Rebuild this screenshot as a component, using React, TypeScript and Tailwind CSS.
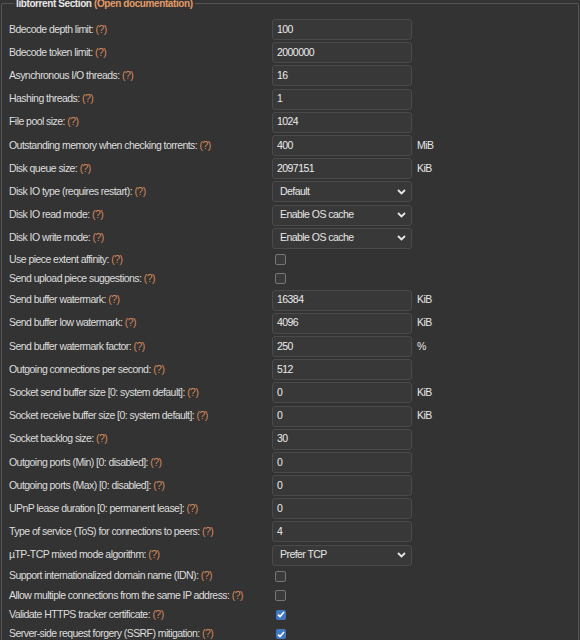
import React from "react";

type Row =
  | { kind: "input"; label: string; value: string; unit?: string }
  | { kind: "select"; label: string; value: string }
  | { kind: "check"; label: string; checked: boolean };

const rows: Row[] = [
  { kind: "input", label: "Bdecode depth limit:", value: "100" },
  { kind: "input", label: "Bdecode token limit:", value: "2000000" },
  { kind: "input", label: "Asynchronous I/O threads:", value: "16" },
  { kind: "input", label: "Hashing threads:", value: "1" },
  { kind: "input", label: "File pool size:", value: "1024" },
  { kind: "input", label: "Outstanding memory when checking torrents:", value: "400", unit: "MiB" },
  { kind: "input", label: "Disk queue size:", value: "2097151", unit: "KiB" },
  { kind: "select", label: "Disk IO type (requires restart):", value: "Default" },
  { kind: "select", label: "Disk IO read mode:", value: "Enable OS cache" },
  { kind: "select", label: "Disk IO write mode:", value: "Enable OS cache" },
  { kind: "check", label: "Use piece extent affinity:", checked: false },
  { kind: "check", label: "Send upload piece suggestions:", checked: false },
  { kind: "input", label: "Send buffer watermark:", value: "16384", unit: "KiB" },
  { kind: "input", label: "Send buffer low watermark:", value: "4096", unit: "KiB" },
  { kind: "input", label: "Send buffer watermark factor:", value: "250", unit: "%" },
  { kind: "input", label: "Outgoing connections per second:", value: "512" },
  { kind: "input", label: "Socket send buffer size [0: system default]:", value: "0", unit: "KiB" },
  { kind: "input", label: "Socket receive buffer size [0: system default]:", value: "0", unit: "KiB" },
  { kind: "input", label: "Socket backlog size:", value: "30" },
  { kind: "input", label: "Outgoing ports (Min) [0: disabled]:", value: "0" },
  { kind: "input", label: "Outgoing ports (Max) [0: disabled]:", value: "0" },
  { kind: "input", label: "UPnP lease duration [0: permanent lease]:", value: "0" },
  { kind: "input", label: "Type of service (ToS) for connections to peers:", value: "4" },
  { kind: "select", label: "µTP-TCP mixed mode algorithm:", value: "Prefer TCP" },
  { kind: "check", label: "Support internationalized domain name (IDN):", checked: false },
  { kind: "check", label: "Allow multiple connections from the same IP address:", checked: false },
  { kind: "check", label: "Validate HTTPS tracker certificate:", checked: true },
  { kind: "check", label: "Server-side request forgery (SSRF) mitigation:", checked: true },
];

function Chevron() {
  return (
    <svg width="9" height="6" viewBox="0 0 9 6" className="shrink-0">
      <path d="M1 1l3.5 3.5L8 1" fill="none" stroke="#e6e6e6" strokeWidth="1.8" />
    </svg>
  );
}

function Checkbox({ checked }: { checked: boolean }) {
  if (checked) {
    return (
      <div className="ml-[4px] w-[10px] h-[10px] rounded-[2px] bg-[#3f77c2] flex items-center justify-center">
        <svg width="8" height="7" viewBox="0 0 8 7">
          <path d="M1 3.6l2 2L7 1" fill="none" stroke="#fff" strokeWidth="1.6" />
        </svg>
      </div>
    );
  }
  return <div className="ml-[3px] w-[11px] h-[11px] rounded-[2px] border border-[#777] bg-[#3a3a3a]" />;
}

function Field({ row }: { row: Row }) {
  if (row.kind === "check") return <Checkbox checked={row.checked} />;
  if (row.kind === "select") {
    return (
      <div className="w-[140px] h-[21px] rounded-[3px] border border-[#4a4a4a] bg-[#383838] flex items-center justify-between pl-[7px] pr-[5px] text-[#e6e6e6]">
        <span>{row.value}</span>
        <Chevron />
      </div>
    );
  }
  return (
    <div className="w-[140px] h-[21px] rounded-[3px] border border-[#4a4a4a] bg-[#383838] flex items-center pl-[4px] text-[#ececec]">
      {row.value}
    </div>
  );
}

export default function App() {
  return (
    <div
      className="w-[580px] h-[640px] overflow-hidden bg-[#333333] text-[10.5px] tracking-[-0.55px] text-[#dedede]"
      style={{ fontFamily: '"Liberation Sans", Arial, sans-serif' }}
    >
      <fieldset className="mx-[1px] -mt-[4px] border border-[#555555] rounded-[2px] pl-[7px] pt-[7px]">
        <legend className="ml-[5px] px-[2px] text-[10px] tracking-[-0.4px] leading-[15px] font-bold text-[#e8e8e8]">
          libtorrent Section <span className="text-[#e39a66]">(Open documentation)</span>
        </legend>
        <div className="flex flex-col">
          {rows.map((row) => (
            <div
              key={row.label}
              className={`flex items-center ${row.kind === "check" ? "h-[19.3px]" : "h-[23.2px]"}`}
            >
              <div className="w-[263px] shrink-0 whitespace-nowrap">
                {row.label} <span className="text-[#d6895b]">(?)</span>
              </div>
              <Field row={row} />
              {row.kind === "input" && row.unit && (
                <span className="ml-[5px] text-[#e6e6e6]">{row.unit}</span>
              )}
            </div>
          ))}
        </div>
      </fieldset>
    </div>
  );
}
